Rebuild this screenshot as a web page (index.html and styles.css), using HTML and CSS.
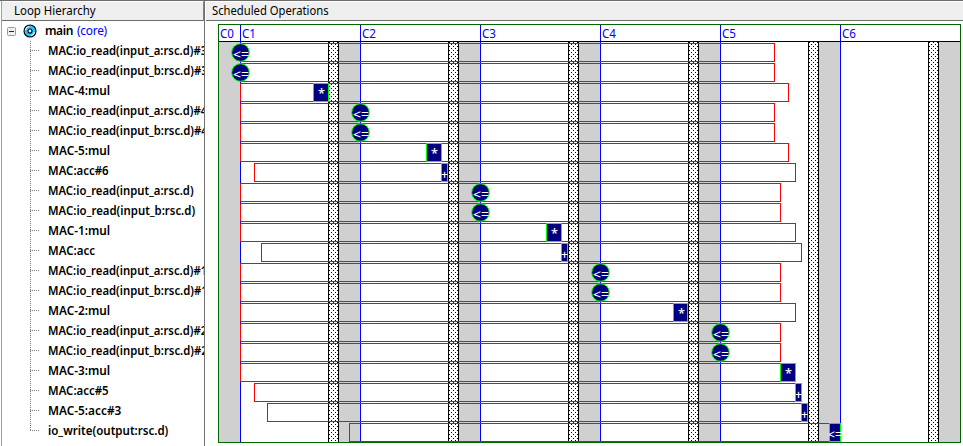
FILE: index.html
```
<!DOCTYPE html>
<html lang="en">
<head>
<meta charset="utf-8">
<title>Schedule</title>
<link rel="stylesheet" href="styles.css">
</head>
<body>
<div class="window">
  <section class="panel tree-panel">
    <header class="panel-header"><span class="title-tree">Loop Hierarchy</span></header>
    <div class="root">
      <svg class="toggle" width="9" height="9" viewBox="0 0 9 9"><rect x=".5" y=".5" width="8" height="8" rx="1" fill="#eef0f4" stroke="#949aa3"/><path d="M2 4.5h5" stroke="#202840"/></svg>
      <svg class="loop" width="14" height="14" viewBox="0 0 14 14"><circle cx="7" cy="7" r="6" fill="#20c8ff" stroke="#000" stroke-width="1.1"/><path d="M2.4 6A5 5 0 0 1 6 2.4M11.6 8A5 5 0 0 1 8 11.6" fill="none" stroke="#c8f6ff" stroke-width="1.3"/><circle cx="7" cy="7" r="2" fill="#fff" stroke="#000" stroke-width="1.1"/></svg>
      <span class="root-name">main</span><span class="root-kind">(core)</span>
    </div>
    <ul class="tree" id="tree"></ul>
  </section>
  <section class="panel chart-panel">
    <header class="panel-header"><span class="title-chart">Scheduled Operations</span></header>
    <svg class="chart" id="chart" width="743" height="419" viewBox="218 24 743 419"></svg>
  </section>
</div>
<script src="chart.js"></script>
</body>
</html>
```
FILE: styles.css
```
* { box-sizing: border-box; }
body { margin: 0; background: #fff; font-family: "Noto Sans", "Open Sans", sans-serif; font-size: 12px; color: #000; overflow: hidden; }
.window { display: grid; grid-template-columns: 204px 757px; column-gap: 1px; width: 963px; height: 446px; padding-left: 1px; border-top: 1px solid #6c6c6c; }
.panel { overflow: hidden; height: 445px; }
.tree-panel { border-left: 1px solid #a0a0a0; border-right: 1px solid #707070; }
.panel-header { height: 20px; border-top: 1px solid #fff; border-bottom: 1px solid #6c6c6c; background: #efefef; line-height: 18px; white-space: nowrap; }
.tree-panel .panel-header { border-right: 1px solid #808080; padding-left: 12px; }
.chart-panel .panel-header { padding-left: 6px; }
.panel-header span { display: inline-block; transform-origin: 0 50%; }
.root { display: flex; align-items: center; height: 20px; padding-left: 5px; line-height: 20px; }
.loop { margin-left: 7px; }
.root-name { width: 32px; margin-left: 8px; font-weight: 600; letter-spacing: -0.4px; }
.root-kind { color: #00f; letter-spacing: -0.3px; }
.tree { list-style: none; margin: 0; padding: 0 0 0 28px; }
.tree li { display: flex; height: 20px; line-height: 20px; white-space: nowrap; font-weight: 600; }
.branch { flex: none; width: 18px; height: 20px; shape-rendering: crispEdges; }
.branch path { fill: none; stroke: #808080; stroke-dasharray: 1 1; }
.tree span { display: inline-block; transform-origin: 0 50%; }
.chart { display: block; margin: 3px 0 0 12px; shape-rendering: crispEdges; }
.wait { fill: #d0d0d0; }
.slack { fill: url(#dots); }
.dot { fill: #000; }
.dots-ground { fill: #fff; }
.rule { stroke: #000; }
.cycle { stroke: #00f; }
.range { fill: none; stroke: #f00; }
.op { fill: #000080; stroke: #0f0; }
.round { shape-rendering: auto; }
.frame { fill: none; stroke: #006400; }
.label { fill: #00f; font-size: 12.5px; }
.symbol { fill: #fff; font-size: 12px; font-weight: 500; }
```
FILE: chart.js
```
// name, text width, range start, range end, operation start, operation end, symbol
const rows = [
  ["MAC:io_read(input_a:rsc.d)#3", 159, 240, 774, 240, 0, "<="],
  ["MAC:io_read(input_b:rsc.d)#3", 160, 240, 774, 240, 0, "<="],
  ["MAC-4:mul", 62, 240, 788, 313, 328, "*"],
  ["MAC:io_read(input_a:rsc.d)#4", 159, 240, 774, 360, 0, "<="],
  ["MAC:io_read(input_b:rsc.d)#4", 160, 240, 774, 360, 0, "<="],
  ["MAC-5:mul", 62, 240, 788, 426, 441, "*"],
  ["MAC:acc#6", 61, 254, 795, 441, 447, "+"],
  ["MAC:io_read(input_a:rsc.d)", 146, 240, 780, 480, 0, "<="],
  ["MAC:io_read(input_b:rsc.d)", 147, 240, 780, 480, 0, "<="],
  ["MAC-1:mul", 62, 240, 795, 546, 561, "*"],
  ["MAC:acc", 47, 261, 801, 561, 567, "+"],
  ["MAC:io_read(input_a:rsc.d)#1", 159, 240, 780, 600, 0, "<="],
  ["MAC:io_read(input_b:rsc.d)#1", 160, 240, 780, 600, 0, "<="],
  ["MAC-2:mul", 62, 240, 795, 673, 687, "*"],
  ["MAC:io_read(input_a:rsc.d)#2", 159, 240, 780, 720, 0, "<="],
  ["MAC:io_read(input_b:rsc.d)#2", 160, 240, 780, 720, 0, "<="],
  ["MAC-3:mul", 62, 240, 795, 780, 795, "*"],
  ["MAC:acc#5", 61, 254, 801, 795, 801, "+"],
  ["MAC-5:acc#3", 73, 267, 807, 801, 807, "+"],
  ["io_write(output:rsc.d)", 120, 349, 840, 829, 840, "<="]
];
const esc = s => s.replace("<", "&lt;");

document.getElementById("tree").innerHTML = rows.map((r, i) => {
  const end = i === rows.length - 1 ? 10 : 20;
  return `<li><svg class="branch" viewBox="0 0 18 20"><path d="M.5 0V${end}M0 9.5H10"/></svg><span data-width="${r[1]}">${r[0]}</span></li>`;
}).join("");

function fit(el, width) {
  el.style.transform = `scaleX(${width / el.offsetWidth})`;
}
document.querySelectorAll(".tree span").forEach(s => fit(s, +s.dataset.width));
fit(document.querySelector(".title-tree"), 82);
fit(document.querySelector(".title-chart"), 117);

let g = `<defs><pattern id="dots" width="4" height="4" patternUnits="userSpaceOnUse"><rect class="dots-ground" width="4" height="4"/><rect class="dot" x="3" y="0" width="1" height="1"/><rect class="dot" x="1" y="2" width="1" height="1"/></pattern></defs>`;
g += `<rect class="wait" x="219" y="42" width="21" height="400"/>`;
for (let x = 328; x < 960; x += 120) {
  g += `<rect class="slack" x="${x}" y="42" width="11" height="400"/><path class="rule" d="M${x + .5} 42V442M${x + 10.5} 42V442"/><rect class="wait" x="${x + 11}" y="42" width="21" height="400"/>`;
}
g += `<path class="rule" d="M219 41.5H960"/>`;
for (let c = 0; c < 7; c++) {
  const x = 120 + c * 120;
  if (c) g += `<path class="cycle" d="M${x + .5} 25V442"/>`;
  g += `<text class="label" x="${c ? x + 2 : 220}" y="38" textLength="14" lengthAdjust="spacingAndGlyphs">C${c}</text>`;
}
rows.forEach((r, i) => {
  const y = 43.5 + i * 20;
  g += `<rect class="range" x="${r[2] + .5}" y="${y}" width="${r[3] - r[2]}" height="18"/>`;
});
rows.forEach((r, i) => {
  const y = 43.5 + i * 20, a = r[4], b = r[5], s = r[6];
  if (b) g += `<rect class="op" x="${a + .5}" y="${y}" width="${b - a}" height="18"/>`;
  else g += `<circle class="op round" cx="${a + .5}" cy="${y + 9}" r="8.8"/>`;
  const w = s === "<=" ? (b ? 14 : 16) : s === "+" ? 7 : 7;
  const x = b ? (s === "<=" ? 828 : s === "+" ? a : a + 5) : a - 7;
  g += `<text class="symbol" x="${x}" y="${y + (s === "*" ? 14.5 : 15.5)}" textLength="${w}" lengthAdjust="spacingAndGlyphs">${esc(s)}</text>`;
});
g += `<rect class="frame" x="218.5" y="24.5" width="742" height="418"/>`;
document.getElementById("chart").innerHTML = g;
```
